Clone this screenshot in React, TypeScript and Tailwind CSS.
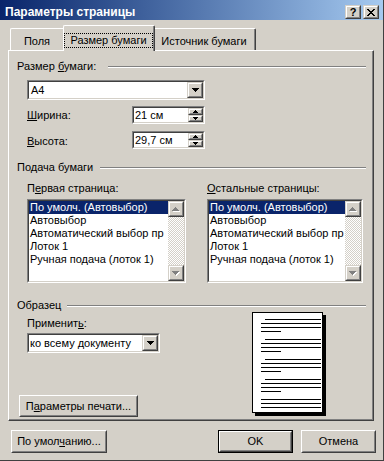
import React from "react";

type P = { className?: string; inner?: string; children?: React.ReactNode };

function Sunken({ className = "", inner = "", children }: P) {
  return (
    <div className={"border border-t-[#808080] border-l-[#808080] border-r-white border-b-white " + className}>
      <div className={"h-full w-full border border-t-[#404040] border-l-[#404040] border-r-[#d4d0c8] border-b-[#d4d0c8] bg-white " + inner}>
        {children}
      </div>
    </div>
  );
}

function SmallBtn({ className = "", children }: P) {
  return (
    <div className={"border border-t-[#d4d0c8] border-l-[#d4d0c8] border-r-[#404040] border-b-[#404040] bg-[#d4d0c8] " + className}>
      <div className="flex h-full w-full items-center justify-center border border-t-white border-l-white border-r-[#808080] border-b-[#808080]">
        {children}
      </div>
    </div>
  );
}

function PushBtn({ className = "", children }: P) {
  return (
    <div className={"border border-t-white border-l-white border-r-[#404040] border-b-[#404040] bg-[#d4d0c8] " + className}>
      <div className="flex h-full w-full items-center justify-center border border-t-[#d4d0c8] border-l-[#d4d0c8] border-r-[#808080] border-b-[#808080]">
        {children}
      </div>
    </div>
  );
}

function DefaultBtn({ className = "", children }: P) {
  return (
    <div className={"border border-black bg-[#d4d0c8] " + className}>
      <div className="h-full w-full border border-t-white border-l-white border-r-[#404040] border-b-[#404040]">
        <div className="flex h-full w-full items-center justify-center border border-t-[#d4d0c8] border-l-[#d4d0c8] border-r-[#808080] border-b-[#808080]">
          {children}
        </div>
      </div>
    </div>
  );
}

function Down({ color = "#000" }: { color?: string }) {
  return (
    <svg width="7" height="4" viewBox="0 0 7 4" shapeRendering="crispEdges">
      <rect x="0" y="0" width="7" height="1" fill={color} />
      <rect x="1" y="1" width="5" height="1" fill={color} />
      <rect x="2" y="2" width="3" height="1" fill={color} />
      <rect x="3" y="3" width="1" height="1" fill={color} />
    </svg>
  );
}

function SpinUp() {
  return (
    <svg width="5" height="3" viewBox="0 0 5 3" shapeRendering="crispEdges">
      <rect x="2" y="0" width="1" height="1" fill="#000" />
      <rect x="1" y="1" width="3" height="1" fill="#000" />
      <rect x="0" y="2" width="5" height="1" fill="#000" />
    </svg>
  );
}

function SpinDown() {
  return (
    <svg width="5" height="3" viewBox="0 0 5 3" shapeRendering="crispEdges">
      <rect x="0" y="0" width="5" height="1" fill="#000" />
      <rect x="1" y="1" width="3" height="1" fill="#000" />
      <rect x="2" y="2" width="1" height="1" fill="#000" />
    </svg>
  );
}

function DisabledArrow({ up }: { up: boolean }) {
  const rows = up ? [[3, 1], [2, 3], [1, 5], [0, 7]] : [[0, 7], [1, 5], [2, 3], [3, 1]];
  return (
    <svg width="8" height="5" viewBox="0 0 8 5" shapeRendering="crispEdges">
      {rows.map(([x, w], i) => (
        <rect key={"w" + i} x={x + 1} y={i + 1} width={w} height="1" fill="#fff" />
      ))}
      {rows.map(([x, w], i) => (
        <rect key={"g" + i} x={x} y={i} width={w} height="1" fill="#808080" />
      ))}
    </svg>
  );
}

function CloseGlyph() {
  const px: [number, number][] = [
    [0, 0], [1, 0], [6, 0], [7, 0],
    [1, 1], [2, 1], [5, 1], [6, 1],
    [2, 2], [3, 2], [4, 2], [5, 2],
    [3, 3], [4, 3],
    [2, 4], [3, 4], [4, 4], [5, 4],
    [1, 5], [2, 5], [5, 5], [6, 5],
    [0, 6], [1, 6], [6, 6], [7, 6],
  ];
  return (
    <svg width="8" height="7" viewBox="0 0 8 7" shapeRendering="crispEdges">
      {px.map(([x, y], i) => (
        <rect key={i} x={x} y={y} width="1" height="1" fill="#000" />
      ))}
    </svg>
  );
}

function Combo({ className = "", text, pad = "pl-[1px]" }: { className?: string; text: string; pad?: string }) {
  return (
    <Sunken className={"h-[20px] " + className} inner="flex">
      <div className={"flex-1 self-center whitespace-nowrap " + pad}>{text}</div>
      <SmallBtn className="h-[16px] w-[16px]">
        <Down />
      </SmallBtn>
    </Sunken>
  );
}

function Spin({ text }: { text: string }) {
  return (
    <Sunken className="h-[18px] w-[73px]" inner="flex">
      <div className="flex-1 self-center pl-[1px] whitespace-nowrap">{text}</div>
      <div className="flex w-[15px] flex-col">
        <SmallBtn className="h-[7px] w-[15px]">
          <SpinUp />
        </SmallBtn>
        <SmallBtn className="h-[7px] w-[15px]">
          <SpinDown />
        </SmallBtn>
      </div>
    </Sunken>
  );
}

const items = [
  "По умолч. (Автовыбор)",
  "Автовыбор",
  "Автоматический выбор пр",
  "Лоток 1",
  "Ручная подача (лоток 1)",
];

function ListBox({ className = "" }: { className?: string }) {
  return (
    <Sunken className={"h-[84px] " + className} inner="flex">
      <div className="flex-1 overflow-hidden">
        {items.map((t, i) => (
          <div
            key={t}
            className={
              "h-[13px] whitespace-nowrap pl-[1px] " + (i === 0 ? "bg-[#0a246a] text-white" : "")
            }
          >
            {t}
          </div>
        ))}
      </div>
      <div className="flex w-[16px] flex-col">
        <SmallBtn className="h-[16px] w-[16px]">
          <DisabledArrow up />
        </SmallBtn>
        <div className="flex-1 bg-[repeating-conic-gradient(#ffffff_0_25%,#d4d0c8_0_50%)] bg-[length:2px_2px]" />
        <SmallBtn className="h-[16px] w-[16px]">
          <DisabledArrow up={false} />
        </SmallBtn>
      </div>
    </Sunken>
  );
}

function GroupHeader({ labelW, children, className = "" }: { labelW: string; children: React.ReactNode; className?: string }) {
  return (
    <div className={"flex h-[13px] items-center pl-[8px] pr-[6px] " + className}>
      <div className={"whitespace-nowrap " + labelW}>{children}</div>
      <div className="h-[2px] flex-1 border-t border-b border-t-[#808080] border-b-white" />
    </div>
  );
}

function PagePreview() {
  const lines: { x1: number; x2: number; y: number }[] = [];
  for (let p = 0; p < 4; p++) {
    const b = 7 + p * 20;
    lines.push({ x1: 13, x2: 69, y: b });
    lines.push({ x1: 9, x2: 69, y: b + 4 });
    lines.push({ x1: 9, x2: 69, y: b + 8 });
    lines.push({ x1: 9, x2: 29, y: b + 12 });
  }
  lines.push({ x1: 9, x2: 69, y: 87 });
  lines.push({ x1: 9, x2: 69, y: 91 });
  lines.push({ x1: 9, x2: 69, y: 95 });
  return (
    <div className="h-[101px] w-[71px] border border-black bg-white shadow-[3px_3px_0_#000]">
      <svg width="69" height="99" viewBox="1 1 69 99" shapeRendering="crispEdges">
        {lines.map((l, i) => (
          <rect key={i} x={l.x1} y={l.y} width={l.x2 - l.x1} height="1" fill="#000" />
        ))}
      </svg>
    </div>
  );
}

export default function App() {
  return (
    <div className="flex h-[461px] w-[384px] flex-col border-r border-b border-r-[#404040] border-b-[#404040] bg-[#d4d0c8] font-['Liberation_Sans',Arial,sans-serif] text-[11px] leading-[13px] text-black">
      {/* Title bar */}
      <div className="flex h-[20px] shrink-0 bg-linear-to-r from-[#0a246a] to-[#a6caf0] pr-[4px]">
        <div className="pl-[5px] pt-[5px] text-[12px] leading-[14px] font-bold whitespace-nowrap text-white">
          Параметры страницы
        </div>
        <div className="ml-auto mt-[5px] flex gap-[2px]">
          <SmallBtn className="h-[14px] w-[16px]">
            <span className="text-[11px] leading-[10px] font-bold">?</span>
          </SmallBtn>
          <SmallBtn className="h-[14px] w-[16px]">
            <CloseGlyph />
          </SmallBtn>
        </div>
      </div>

      {/* Tabs */}
      <div className="flex h-[30px] shrink-0 items-end pl-[10px]">
        <div className="h-[22px] w-[55px] rounded-tl-[2px] rounded-tr-[2px] border-t border-l border-r border-t-white border-l-white border-r-[#404040]">
          <div className="h-full border-r border-r-[#808080] pt-[6px] text-center">Поля</div>
        </div>
        <div className="relative z-10 -mb-[1px] -ml-[2px] h-[26px] w-[92px] rounded-tl-[2px] rounded-tr-[2px] border-t border-l border-r border-t-white border-l-white border-r-[#404040] bg-[#d4d0c8]">
          <div className="flex h-full justify-center border-r border-r-[#808080] pt-[7px]">
            <div className="h-[15px] border border-dotted border-black px-[5px] whitespace-nowrap">
              Размер бумаги
            </div>
          </div>
        </div>
        <div className="-ml-[2px] h-[22px] w-[103px] rounded-tl-[2px] rounded-tr-[2px] border-t border-l border-r border-t-white border-l-white border-r-[#404040]">
          <div className="h-full border-r border-r-[#808080] pt-[6px] text-center whitespace-nowrap">
            Источник бумаги
          </div>
        </div>
      </div>

      {/* Panel */}
      <div className="ml-[8px] h-[371px] w-[366px] shrink-0 border border-t-white border-l-white border-r-[#404040] border-b-[#404040]">
        <div className="flex h-full w-full flex-col border-r border-b border-r-[#808080] border-b-[#808080]">
          <GroupHeader labelW="w-[91px]" className="mt-[9px]">
            Размер <span className="underline">б</span>умаги:
          </GroupHeader>
          <Combo className="mt-[7px] ml-[18px] w-[178px]" text="A4" pad="pl-[2px]" />
          <div className="mt-[6px] ml-[18px] flex h-[18px] items-center">
            <div className="w-[105px]">
              <span className="underline">Ш</span>ирина:
            </div>
            <Spin text="21 см" />
          </div>
          <div className="mt-[7px] ml-[18px] flex h-[18px] items-center">
            <div className="w-[105px] pt-[3px]">
              <span className="underline">В</span>ысота:
            </div>
            <Spin text="29,7 см" />
          </div>

          <GroupHeader labelW="w-[83px]" className="mt-[12px]">
            Подача бумаги
          </GroupHeader>
          <div className="mt-[8px] ml-[18px] flex h-[13px]">
            <div className="w-[180px] whitespace-nowrap">
              П<span className="underline">е</span>рвая страница:
            </div>
            <div className="whitespace-nowrap">
              <span className="underline">О</span>стальные страницы:
            </div>
          </div>
          <div className="mt-[4px] ml-[18px] flex">
            <ListBox className="w-[159px]" />
            <ListBox className="ml-[21px] w-[156px]" />
          </div>

          <GroupHeader labelW="w-[50px]" className="mt-[16px]">
            Образец
          </GroupHeader>
          <div className="flex flex-1">
            <div className="flex w-[160px] flex-col pl-[10px] pb-[2px]">
              <div className="mt-[5px] ml-[8px] h-[13px] whitespace-nowrap">
                Применит<span className="underline">ь</span>:
              </div>
              <Combo className="mt-[3px] ml-[8px] w-[133px]" text="ко всему документу" />
              <div className="flex-1" />
              <PushBtn className="h-[22px] w-[119px]">
                <span className="whitespace-nowrap">
                  П<span className="underline">а</span>раметры печати...
                </span>
              </PushBtn>
            </div>
            <div className="ml-[83px]">
              <PagePreview />
            </div>
          </div>
        </div>
      </div>

      {/* Bottom buttons */}
      <div className="mt-[9px] flex h-[23px] shrink-0 pr-[7px] pl-[11px]">
        <PushBtn className="h-[23px] w-[96px]">
          <span className="whitespace-nowrap">
            По умол<span className="underline">ч</span>анию...
          </span>
        </PushBtn>
        <div className="ml-auto flex gap-[8px]">
          <DefaultBtn className="h-[23px] w-[75px]">OK</DefaultBtn>
          <PushBtn className="h-[23px] w-[75px]">Отмена</PushBtn>
        </div>
      </div>
    </div>
  );
}
